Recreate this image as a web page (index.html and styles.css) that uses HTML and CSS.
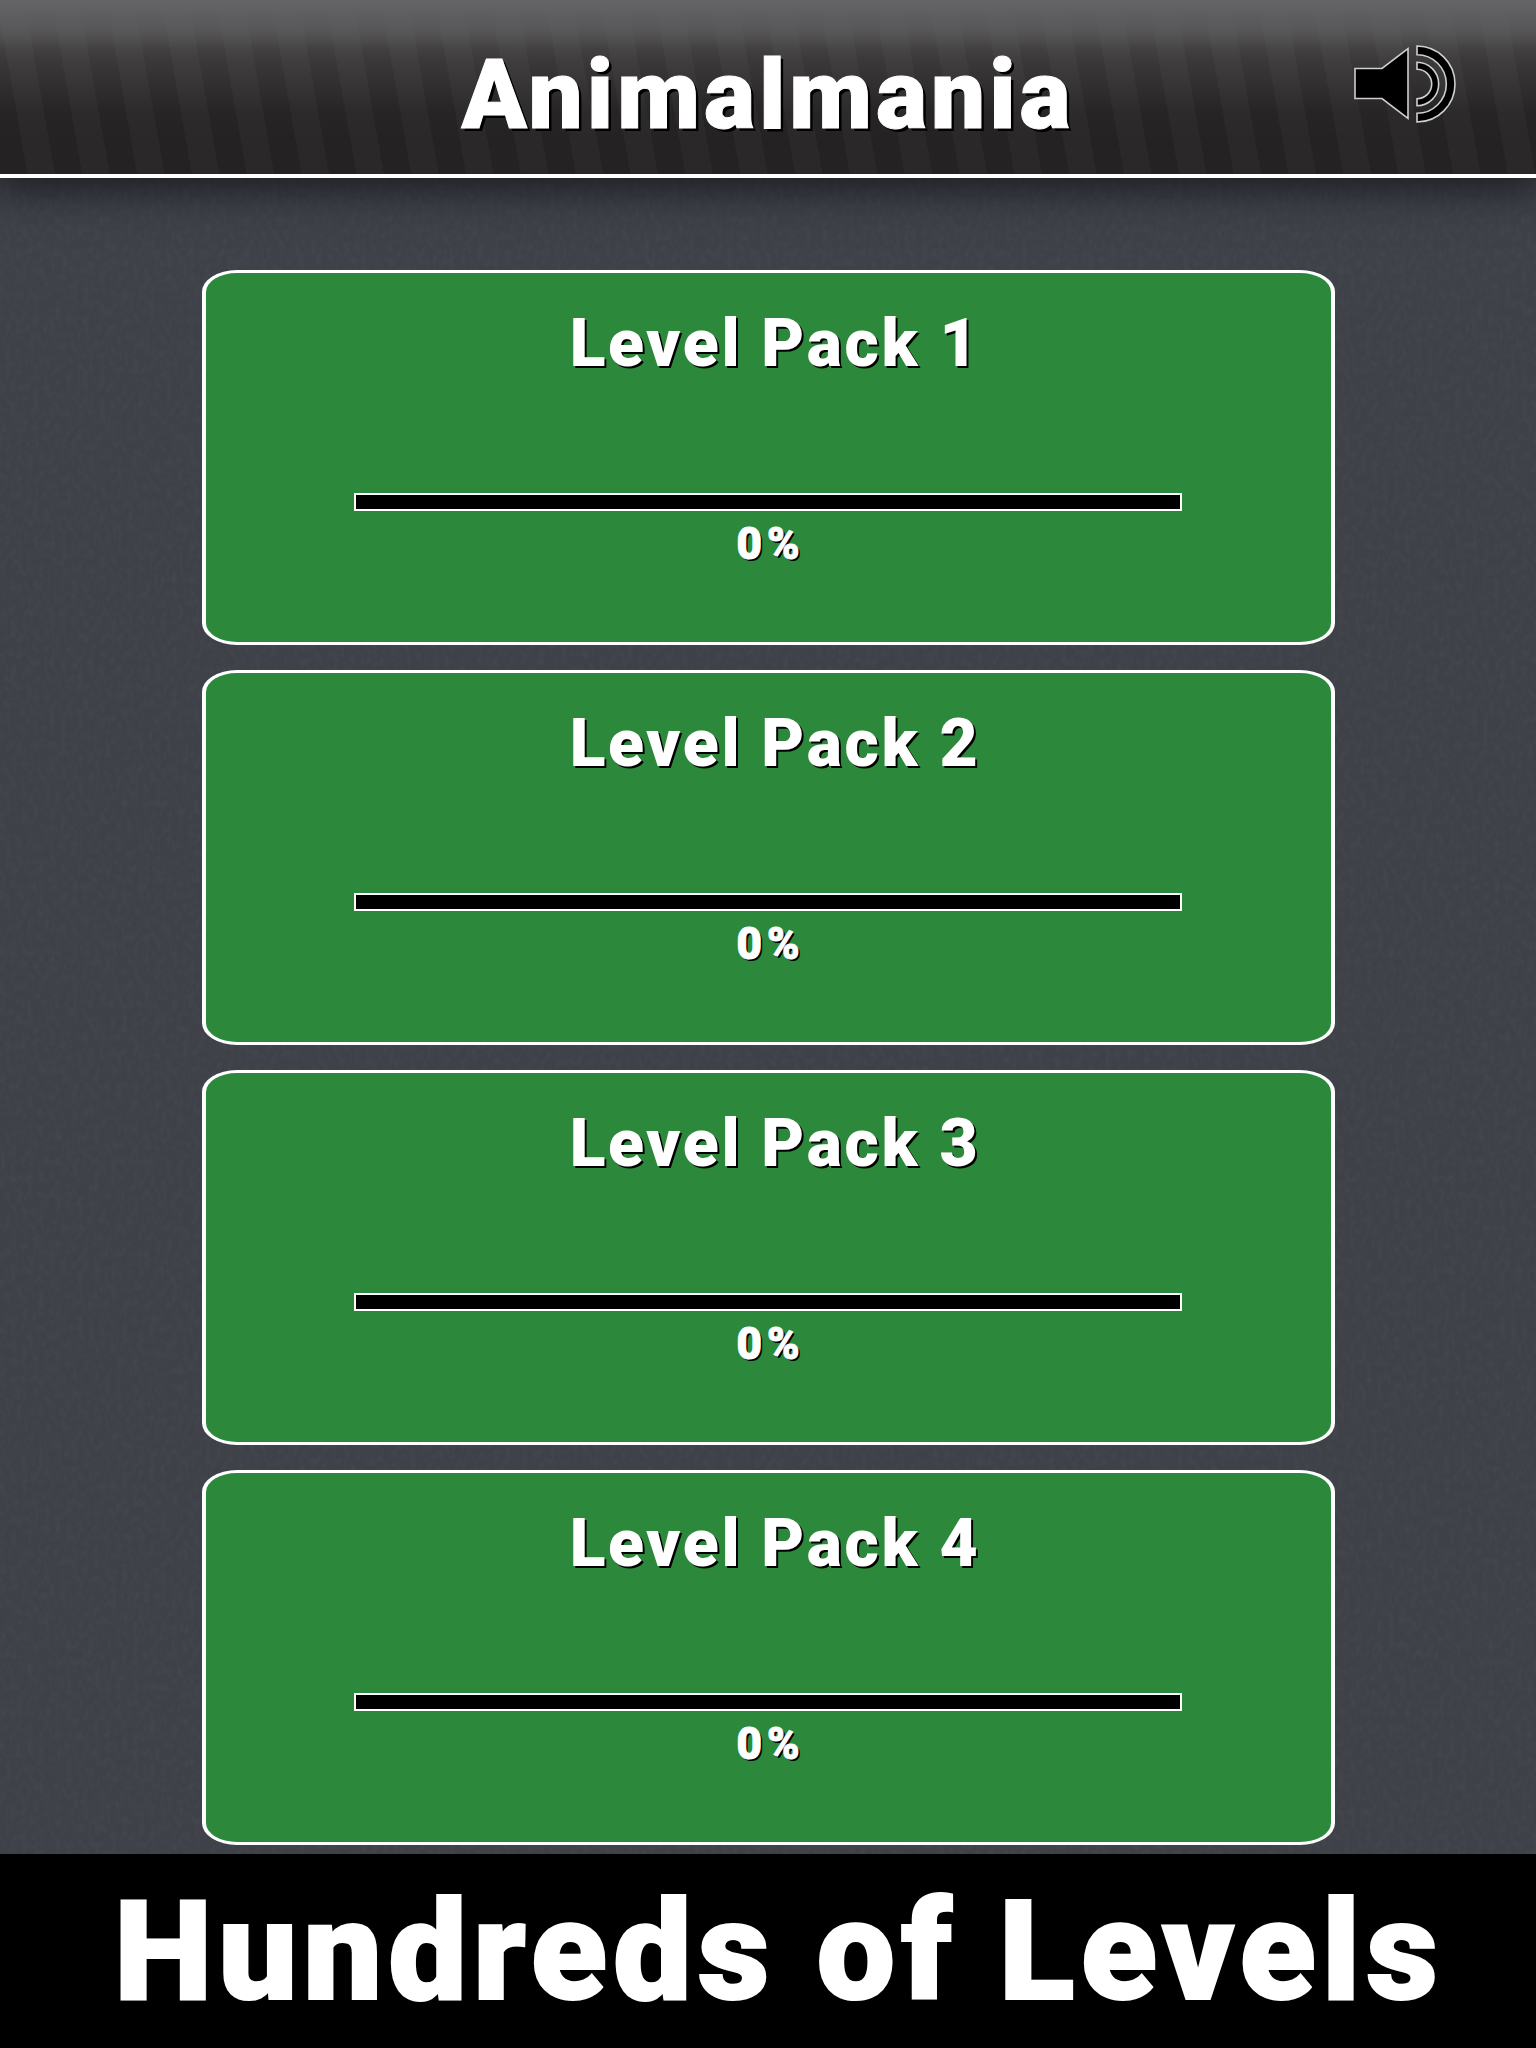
FILE: index.html
```html
<!DOCTYPE html>
<html lang="en">
<head>
<meta charset="utf-8">
<title>Animalmania</title>
<link rel="stylesheet" href="styles.css">
</head>
<body>
<svg class="noise" aria-hidden="true">
  <filter id="grain" x="0" y="0" width="100%" height="100%">
    <feTurbulence type="fractalNoise" baseFrequency="0.18 0.12" numOctaves="3" seed="4"/>
    <feColorMatrix type="matrix" values="0 0 0 0 1  0 0 0 0 1  0 0 0 0 1  1.1 0 0 0 -0.42"/>
  </filter>
  <rect width="100%" height="100%" filter="url(#grain)"/>
</svg>
<div class="page">
  <header class="topbar">
    <h1 class="app-title">Animalmania</h1>
    <svg class="sound" viewBox="0 0 115 85" aria-hidden="true">
      <path class="sound-shape" d="M6 24.500H33L59 4.500V74.500L33 54.500H6Z"/>
      <path class="sound-shape" d="M68 18.300A21.700 21.700 0 0 1 68 61.700V54.700A14.700 14.700 0 0 0 68 25.300Z"/>
      <path class="sound-shape" d="M68 2A38 38 0 0 1 68 78V69.300A29.300 29.300 0 0 0 68 10.700Z"/>
    </svg>
  </header>
  <main class="packs">
    <section class="pack">
      <h2 class="pack-title">Level Pack 1</h2>
      <div class="bar"></div>
      <p class="pct">0%</p>
    </section>
    <section class="pack">
      <h2 class="pack-title">Level Pack 2</h2>
      <div class="bar"></div>
      <p class="pct">0%</p>
    </section>
    <section class="pack">
      <h2 class="pack-title">Level Pack 3</h2>
      <div class="bar"></div>
      <p class="pct">0%</p>
    </section>
    <section class="pack">
      <h2 class="pack-title">Level Pack 4</h2>
      <div class="bar"></div>
      <p class="pct">0%</p>
    </section>
  </main>
  <footer class="banner"><span class="banner-text">Hundreds of Levels</span></footer>
</div>
</body>
</html>
```
FILE: styles.css
```css
* { box-sizing: border-box; }
html, body { margin: 0; padding: 0; }
body {
  width: 1536px;
  height: 2048px;
  overflow: hidden;
  position: relative;
  background: #3f4149;
  font-family: "Roboto", "Liberation Sans", sans-serif;
  color: #fff;
}
.noise {
  position: absolute;
  inset: 0;
  width: 100%;
  height: 100%;
  opacity: .05;
}
.page {
  position: relative;
  display: flex;
  flex-direction: column;
  height: 2048px;
}
.topbar {
  flex: none;
  height: 178px;
  border-bottom: 4px solid #fff;
  display: flex;
  justify-content: center;
  position: relative;
  background:
    linear-gradient(180deg, #656567 0, rgba(92,92,94,.85) 20px, rgba(80,80,82,0) 48px),
    linear-gradient(180deg, rgba(255,255,255,.25) 0, rgba(255,255,255,.22) 22px, rgba(255,255,255,.1) 60px, rgba(255,255,255,.01) 112px, rgba(255,255,255,0) 140px),
    repeating-linear-gradient(80deg, #252223 0 27px, #2a2829 27px 54px);
  box-shadow: 0 4px 40px 6px rgba(18,20,24,.85);
  z-index: 1;
}
.app-title {
  margin: 39px 0 0;
  font-size: 96px;
  line-height: 112px;
  font-weight: 900;
  letter-spacing: 4px;
  -webkit-text-stroke: 1px #fff;
  text-shadow: 3px 3px 0 #000;
}
.sound {
  position: absolute;
  left: 1349px;
  top: 44px;
  width: 115px;
  height: 85px;
}
.sound-shape {
  fill: #000;
  stroke: #cfcfcf;
  stroke-width: 1.6;
}
.packs {
  flex: 1;
  display: flex;
  flex-direction: column;
  align-items: center;
  gap: 25px;
  padding-top: 92px;
}
.pack {
  width: 1133px;
  height: 375px;
  flex: none;
  background: #2c893b;
  border-style: solid;
  border-color: #fff;
  border-width: 3px 4px;
  border-radius: 35px / 22px;
  display: flex;
  flex-direction: column;
  align-items: center;
}
.pack-title {
  margin: 30px 0 0;
  padding-left: 14px;
  font-size: 66px;
  line-height: 82px;
  font-weight: 900;
  letter-spacing: 2.700px;
  text-shadow: 2px 2px 0 #000;
}
.bar {
  width: 828px;
  height: 18px;
  margin-top: 108px;
  background: #000;
  border: 2px solid #fff;
}
.pct {
  margin: 10px 0 0;
  padding-left: 5px;
  font-size: 44px;
  line-height: 46px;
  font-weight: 900;
  letter-spacing: 5px;
  -webkit-text-stroke: 1px #fff;
  text-shadow: 2px 2px 0 #000;
}
.banner {
  flex: none;
  height: 194px;
  background: #000;
  display: flex;
  justify-content: center;
  padding-left: 22px;
  font-size: 140px;
  line-height: 194px;
  font-weight: 900;
  letter-spacing: 6px;
}
.banner-text {
  -webkit-text-stroke: 2px #fff;
}
```
